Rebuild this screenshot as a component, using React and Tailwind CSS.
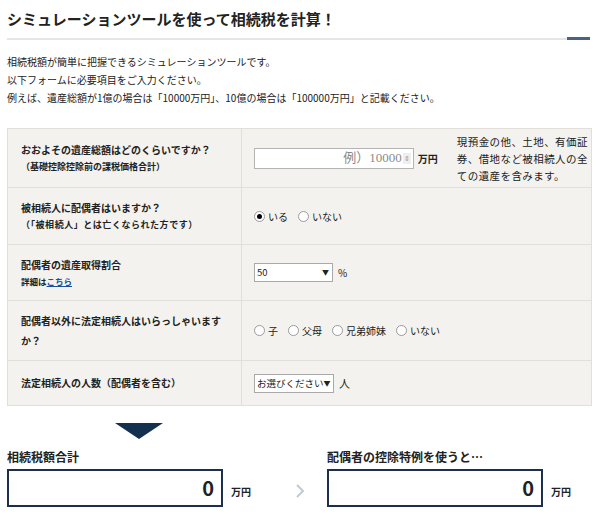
import React, { useState } from "react";

const font = { fontFamily: '"Noto Sans CJK JP", "Noto Sans", sans-serif' };

function Radio({ checked, label }) {
  return (
    <label className="flex items-center gap-[3px] mr-[10px] whitespace-nowrap">
      <span className="w-[11px] h-[11px] rounded-full border border-[#9a9a9a] bg-white flex items-center justify-center">
        {checked && <span className="w-[5px] h-[5px] rounded-full bg-black"></span>}
      </span>
      <span>{label}</span>
    </label>
  );
}

function FakeSelect({ value, width }) {
  return (
    <div className={`flex items-center justify-between bg-white border border-[#a9a9a9] h-[19px] pl-[2px] pr-[3px] text-[9.5px] whitespace-nowrap ${width}`}>
      <span>{value}</span>
      <span className="text-[7px]">▼</span>
    </div>
  );
}

export default function App() {
  const [amount] = useState("");

  return (
    <div className="w-[600px] h-[517px] bg-white text-[#222] overflow-hidden" style={font}>
      <h1 className="pl-[7px] pt-[7px] text-[15px] font-bold leading-[24px]">
        シミュレーションツールを使って相続税を計算！
      </h1>

      {/* underline with accent at the right end */}
      <div className="flex items-center mt-[6px] ml-[7px] mr-[10px]">
        <div className="flex-1 h-[2px] bg-[#e6e6e6]"></div>
        <div className="w-[23px] h-[3px] bg-[#4a6283]"></div>
      </div>

      <div className="pl-[7px] mt-[13px] text-[10px] leading-[18px]">
        <p>相続税額が簡単に把握できるシミュレーションツールです。</p>
        <p>以下フォームに必要項目をご入力ください。</p>
        <p>例えば、遺産総額が1億の場合は「10000万円」、10億の場合は「100000万円」と記載ください。</p>
      </div>

      <table className="ml-[7px] mt-[21px] w-[585px] table-fixed border-collapse bg-[#f4f2ee] text-[10px]">
        <colgroup>
          <col className="w-[234px]" />
          <col />
        </colgroup>
        <tbody>
          <tr className="h-[59px]">
            <th className="border border-[#e2dfd9] text-left font-bold pl-[13px] align-middle">
              <p className="text-[10px] leading-[18px]">おおよその遺産総額はどのくらいですか？</p>
              <p className="text-[9px] leading-[16px]">（基礎控除控除前の課税価格合計）</p>
            </th>
            <td className="border border-[#e2dfd9] pl-[12px] align-middle">
              <div className="flex items-center">
                <div className="flex items-center justify-end w-[162px] h-[21px] bg-white border border-[#b4b4b4] pr-[2px]">
                  <span className="text-[#8a8a8a] text-[13px]" style={{ fontFamily: '"Liberation Serif", "Noto Sans CJK JP", serif' }}>
                    {amount || "例）10000"}
                  </span>
                  <span className="ml-[1px] w-[8px] h-[11px] bg-[#eeeeee] text-[7px] leading-[11px] text-[#999] text-center">⇕</span>
                </div>
                <span className="ml-[4px] font-bold text-[10px] whitespace-nowrap">万円</span>
                <p className="ml-[19px] text-[10.5px] leading-[17px] tracking-[0.04em] w-[136px]">
                  現預金の他、土地、有価証券、借地など被相続人の全ての遺産を含みます。
                </p>
              </div>
            </td>
          </tr>
          <tr className="h-[57px]">
            <th className="border border-[#e2dfd9] text-left font-bold pl-[13px]">
              <p className="text-[10px] leading-[18px]">被相続人に配偶者はいますか？</p>
              <p className="text-[9px] leading-[16px] tracking-[0.06em]">（「被相続人」とは亡くなられた方です）</p>
            </th>
            <td className="border border-[#e2dfd9] pl-[12px]">
              <div className="flex items-center">
                <Radio checked label="いる" />
                <Radio label="いない" />
              </div>
            </td>
          </tr>
          <tr className="h-[56px]">
            <th className="border border-[#e2dfd9] text-left font-bold pl-[13px]">
              <p className="text-[10px] leading-[18px]">配偶者の遺産取得割合</p>
              <p className="text-[8.5px] leading-[15px]">
                詳細は<span className="text-[#1a4f9c] underline">こちら</span>
              </p>
            </th>
            <td className="border border-[#e2dfd9] pl-[12px]">
              <div className="flex items-center gap-[5px]">
                <FakeSelect value="50" width="w-[79px]" />
                <span className="text-[10px]">%</span>
              </div>
            </td>
          </tr>
          <tr className="h-[60px]">
            <th className="border border-[#e2dfd9] text-left font-bold pl-[13px] pr-[14px]">
              <p className="text-[10px] leading-[20px]">配偶者以外に法定相続人はいらっしゃいますか？</p>
            </th>
            <td className="border border-[#e2dfd9] pl-[12px]">
              <div className="flex items-center">
                <Radio label="子" />
                <Radio label="父母" />
                <Radio label="兄弟姉妹" />
                <Radio label="いない" />
              </div>
            </td>
          </tr>
          <tr className="h-[45px]">
            <th className="border border-[#e2dfd9] text-left font-bold pl-[13px]">
              <p className="text-[10px] leading-[18px]">法定相続人の人数（配偶者を含む）</p>
            </th>
            <td className="border border-[#e2dfd9] pl-[12px]">
              <div className="flex items-center gap-[5px]">
                <FakeSelect value="お選びください" width="w-[80px]" />
                <span className="text-[11px]">人</span>
              </div>
            </td>
          </tr>
        </tbody>
      </table>

      {/* down arrow between form and result */}
      <div className="ml-[115px] mt-[17px] w-0 h-0 border-l-[24px] border-r-[24px] border-t-[16px] border-l-transparent border-r-transparent border-t-[#14304f]"></div>

      <div className="flex items-start mt-[10px] pl-[7px]">
        <div>
          <p className="text-[12px] font-bold leading-[16px]">相続税額合計</p>
          <div className="flex items-end mt-[4px]">
            <div className="w-[216px] h-[38px] border-2 border-[#1c2f4d] flex items-center justify-end pr-[7px] text-[20px] font-bold">
              0
            </div>
            <span className="ml-[8px] mb-[8px] text-[10px] font-bold">万円</span>
          </div>
        </div>
        <div className="w-[76px] h-[58px] flex items-end justify-center pb-[8px] pl-[22px]">
          <svg width="10" height="16" viewBox="0 0 10 16">
            <path d="M2 2 L8 8 L2 14" fill="none" stroke="#c3cad3" strokeWidth="2" />
          </svg>
        </div>
        <div>
          <p className="text-[12px] font-bold leading-[16px]">配偶者の控除特例を使うと…</p>
          <div className="flex items-end mt-[4px]">
            <div className="w-[216px] h-[38px] border-2 border-[#1c2f4d] flex items-center justify-end pr-[7px] text-[20px] font-bold">
              0
            </div>
            <span className="ml-[8px] mb-[8px] text-[10px] font-bold">万円</span>
          </div>
        </div>
      </div>
    </div>
  );
}
